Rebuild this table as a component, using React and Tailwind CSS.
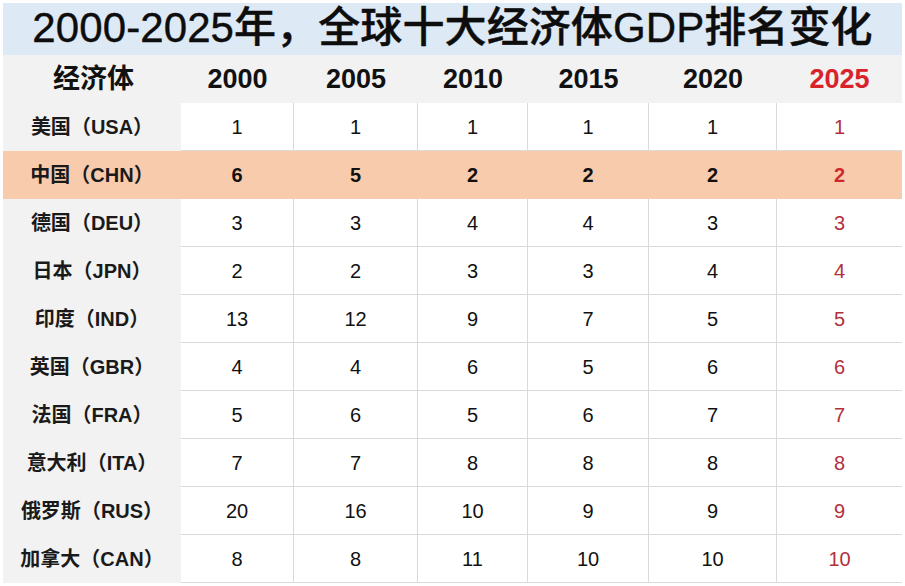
import React from "react";

const years = ["2000", "2005", "2010", "2015", "2020", "2025"];
const rows = [
  ["美国", "USA", [1, 1, 1, 1, 1, 1]],
  ["中国", "CHN", [6, 5, 2, 2, 2, 2]],
  ["德国", "DEU", [3, 3, 4, 4, 3, 3]],
  ["日本", "JPN", [2, 2, 3, 3, 4, 4]],
  ["印度", "IND", [13, 12, 9, 7, 5, 5]],
  ["英国", "GBR", [4, 4, 6, 5, 6, 6]],
  ["法国", "FRA", [5, 6, 5, 6, 7, 7]],
  ["意大利", "ITA", [7, 7, 8, 8, 8, 8]],
  ["俄罗斯", "RUS", [20, 16, 10, 9, 9, 9]],
  ["加拿大", "CAN", [8, 8, 11, 10, 10, 10]],
];

const font = { fontFamily: '"Liberation Sans", "Noto Sans CJK SC", sans-serif' };

export default function App() {
  return (
    <div
      className="w-[905px] h-[586px] bg-white overflow-hidden pt-[3px] pl-[3px] text-[#111]"
      style={font}
    >
      <div className="w-[899px] h-[52px] bg-[#dde9f5] flex items-center justify-center pb-[2px]">
        <span className="text-[42px] font-medium tracking-[0.1px] leading-none text-[#0d0d0d]" style={{ WebkitTextStroke: "0.4px #0d0d0d" }}>
          2000-2025年，全球十大经济体GDP排名变化
        </span>
      </div>
      <div className="grid grid-cols-[178px_113px_124px_110px_121px_128px_125px] w-[899px]">
        <div className="h-[48px] bg-[#f2f2f2] flex items-center justify-center text-[27px] font-bold pl-[3px]">经济体</div>
        {years.map((y, i) => (
          <div
            key={y}
            className={
              "h-[48px] bg-[#f2f2f2] flex items-center justify-center text-[27px] font-bold " +
              (i === 5 ? "text-[#d8232b]" : "text-[#111]")
            }
          >
            {y}
          </div>
        ))}
        {rows.map(([name, code, vals]) => {
          const hl = code === "CHN";
          return (
            <React.Fragment key={code}>
              <div
                className={
                  "h-[48px] flex items-center justify-center text-[20px] font-bold text-[#1a1a1a] " +
                  (hl ? "bg-[#f8cbad] border-b border-[#f8cbad]" : "bg-[#f2f2f2]")
                }
              >
                {name}（{code}）
              </div>
              {vals.map((v, i) => (
                <div
                  key={i}
                  className={
                    "h-[48px] flex items-center justify-center text-[20px] border-b " +
                    (i < 5 ? "border-r " : "") +
                    (hl
                      ? "bg-[#f8cbad] border-[#f8cbad] font-bold " + (i === 5 ? "text-[#d0282e]" : "text-[#111]")
                      : "bg-white border-[#dadada] " + (i === 5 ? "text-[#b3303a]" : "text-[#111]"))
                  }
                >
                  {v}
                </div>
              ))}
            </React.Fragment>
          );
        })}
      </div>
    </div>
  );
}
